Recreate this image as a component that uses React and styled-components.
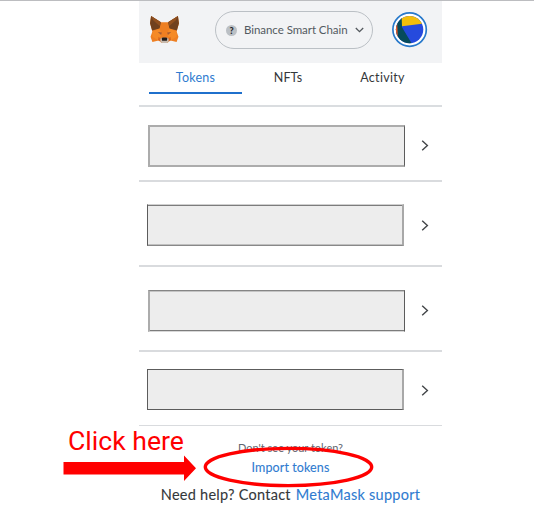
import React from "react";
import styled, { createGlobalStyle } from "styled-components";

const GlobalStyle = createGlobalStyle`
  * { box-sizing: border-box; }
  body { margin: 0; background: #fff; overflow: hidden; }
`;

const Page = styled.div`
  position: relative;
  width: 534px;
  height: 510px;
  border-top: 1px solid #bcbdc0;
  background: #fff;
  font-family: Lato, "Liberation Sans", sans-serif;
`;

const Wallet = styled.main`
  width: 303px;
  margin-left: 139px;
`;

const Header = styled.header`
  display: flex;
  align-items: flex-start;
  height: 62px;
  padding: 10px 14px 0 10px;
  background: #f2f3f5;
`;

const FoxLogo = styled.svg`
  flex: none;
  width: 31px;
  height: 29px;
  margin: 4px -1px 0 0;
`;

const NetworkPicker = styled.button`
  display: flex;
  align-items: center;
  width: 158px;
  height: 38px;
  margin: 0 0 0 36px;
  padding: 0 8px 0 10px;
  border: 1px solid #bbc0c5;
  border-radius: 19px;
  background: #f2f3f5;
  color: #535a61;
  font: inherit;
`;

const NetworkBadge = styled.span`
  flex: none;
  width: 11px;
  height: 11px;
  margin-right: 7px;
  border-radius: 50%;
  background: #bbc0c5;
  color: #24272a;
  font-size: 9px;
  font-weight: 900;
  line-height: 11px;
  text-align: center;
`;

const NetworkName = styled.span`
  width: 106px;
  font-size: 11.5px;
  line-height: 16px;
  letter-spacing: -0.05px;
  text-align: left;
  white-space: nowrap;
`;

const DownIcon = styled.svg`
  flex: none;
  width: 9px;
  height: 6px;
  margin-left: 5px;
`;

const Avatar = styled.svg`
  flex: none;
  width: 37px;
  height: 36px;
  margin: 1px 0 0 18px;
`;

const Tabs = styled.nav`
  display: flex;
  height: 44px;
  padding: 0 10px;
  border-bottom: 2px solid #dadde0;
`;

const Tab = styled.a`
  width: ${(p) => p.$width}px;
  height: 31px;
  padding-top: 6px;
  border-bottom: 2px solid ${(p) => (p.$active ? "#1f70cc" : "transparent")};
  color: ${(p) => (p.$active ? "#2f7bd0" : "#34373a")};
  font-size: 12.5px;
  line-height: 18px;
  letter-spacing: ${(p) => p.$spacing}px;
  text-align: center;
`;

const Row = styled.div`
  display: flex;
  align-items: flex-start;
  height: ${(p) => p.$height}px;
  padding: ${(p) => p.$top}px 13px 0 ${(p) => p.$left}px;
  border-bottom: ${(p) => p.$line}px solid #d9dbde;
`;

const TokenBox = styled.div`
  flex: none;
  width: 257px;
  height: ${(p) => p.$height}px;
  background: #ededed;
  border-style: solid;
  border-width: ${(p) => p.$widths};
  border-color: ${(p) => p.$colors};
  box-shadow: ${(p) => p.$inner || "none"};
`;

const NextIcon = styled.svg`
  flex: none;
  width: 8px;
  height: 12px;
  margin: ${(p) => p.$top}px 0 0 auto;
`;

const Footer = styled.footer`
  display: flex;
  flex-direction: column;
  align-items: center;
  padding-top: 14px;
`;

const Hint = styled.div`
  color: #5f6770;
  font-size: 11px;
  line-height: 16px;
  letter-spacing: 0;
`;

const ImportLink = styled.a`
  margin-top: 3px;
  color: #2f7bd0;
  font-size: 12.5px;
  line-height: 18px;
  letter-spacing: 0.1px;
  -webkit-text-stroke: 0.1px currentColor;
`;

const Help = styled.div`
  margin-top: 8px;
  color: #34373a;
  font-size: 14.5px;
  line-height: 20px;
  letter-spacing: 0.26px;
  white-space: nowrap;
  -webkit-text-stroke: 0.1px currentColor;
`;

const SupportLink = styled.a`
  margin-left: 1px;
  color: #2f7bd0;
`;

const Callout = styled.div`
  position: absolute;
  left: 68px;
  top: 424px;
  color: #f00;
  font-family: Roboto, sans-serif;
  font-size: 26.6px;
  line-height: 32px;
  white-space: nowrap;
`;

const Marks = styled.svg`
  position: absolute;
  left: 60px;
  top: 439px;
  width: 320px;
  height: 54px;
`;

const rows = [
  { height: 75, top: 18, left: 9, line: 2, arrow: 15, box: { $height: 42, $widths: "2px 1px 2px 2px", $colors: "#acacac #5c5c5c #acacac #acacac" } },
  { height: 85, top: 22, left: 8, line: 2, arrow: 16, box: { $height: 42, $widths: "1px 2px 1px 1px", $colors: "#d0d0d0 #a8a8a8 #888 #5c5c5c", $inner: "inset 0 1px #7c7c7c, inset 0 -1px #c0c0c0" } },
  { height: 85, top: 23, left: 9, line: 2, arrow: 15, box: { $height: 42, $widths: "1px 1px 1px 2px", $colors: "#858585 #5c5c5c #d8d8d8 #acacac", $inner: "inset 0 1px #c4c4c4, inset 0 -1px #7c7c7c" } },
  { height: 74, top: 17, left: 8, line: 1, arrow: 16, box: { $height: 41, $widths: "1px 2px 1px 1px", $colors: "#5c5c5c #a8a8a8 #5c5c5c #5c5c5c" } },
];

function Fox() {
  return (
    <FoxLogo viewBox="0 0 30 28">
      <path d="M2 1 11.500 7h7L28 1l1 7-2.300 8 1.800 5-1.800 5-6-1.300L17.500 27h-5L9.300 24.700 3.300 26 1.500 21l1.800-5L1 8z" fill="#ee7f22" />
      <path d="M2 1 11.500 7l-1.200 6-7.300 2L1 8zM28 1l-9.500 6 1.200 6 7.300 2 2-7z" fill="#70411f" />
      <path d="m2 1 9.500 6-1.200 3.500L4 5zM28 1l-9.500 6 1.200 3.500L26 5z" fill="#91501f" />
      <path d="m3.300 16 7-3 2 5.500-3 6.200L3.300 21zM26.700 16l-7-3-2 5.500 3 6.200 6-3.700z" fill="#f58a26" />
      <path d="m8.500 16.500 4 .5-.8 2.300zM21.500 16.500l-4 .5.8 2.300z" fill="#a45b34" />
      <path d="m9.300 21 2.700 2.500-.3 2.200-3-1.500zM20.700 21 18 23.500l.3 2.200 3-1.500z" fill="#d7661d" />
      <path d="m11 23 1.500-1h5l1.500 1v2.800L17.300 27h-4.600L11 25.800z" fill="#c6b9ad" />
      <path d="m12.300 22.500.8-.7h3.800l.8.700-.4 2.500h-4.600z" fill="#211c1a" />
    </FoxLogo>
  );
}

export default function App() {
  return (
    <>
      <GlobalStyle />
      <Page>
        <Wallet>
          <Header>
            <Fox />
            <NetworkPicker>
              <NetworkBadge>?</NetworkBadge>
              <NetworkName>Binance Smart Chain</NetworkName>
              <DownIcon viewBox="0 0 9 6">
                <path d="m.8 1 3.700 3.700L8.200 1" fill="none" stroke="#53585d" strokeWidth="1.300" />
              </DownIcon>
            </NetworkPicker>
            <Avatar viewBox="-0.600 0.400 37 36">
              <defs>
                <clipPath id="avatarDisc"><circle cx="18" cy="18" r="13.700" /></clipPath>
              </defs>
              <circle cx="18" cy="18" r="16.700" fill="#fff" stroke="#2879cb" strokeWidth="1.700" />
              <g clipPath="url(#avatarDisc)">
                <path d="M0 0h36v36H0z" fill="#264add" />
                <path d="M0 0h10.400v15.700L20.500 32.500V36H0z" fill="#064b5c" />
                <path d="M9.800 0H36v11.500L10.400 14.700z" fill="#f3be0b" />
                <path d="M3 8h2.400l.8 18H3z" fill="#f05a2a" />
              </g>
            </Avatar>
          </Header>
          <Tabs>
            <Tab $active $width={93} $spacing={0.25}>Tokens</Tab>
            <Tab $width={92} $spacing={0.1}>NFTs</Tab>
            <Tab $width={97} $spacing={0.3}>Activity</Tab>
          </Tabs>
          {rows.map((r, i) => (
            <Row key={i} $height={r.height} $top={r.top} $left={r.left} $line={r.line}>
              <TokenBox {...r.box} />
              <NextIcon $top={r.arrow} viewBox="0 0.500 8 12">
                <path d="m1.200 1.200 5.200 4.800-5.200 4.800" fill="none" stroke="#424548" strokeWidth="1.400" />
              </NextIcon>
            </Row>
          ))}
          <Footer>
            <Hint>Don't see your token?</Hint>
            <ImportLink>Import tokens</ImportLink>
            <Help>
              Need help? Contact <SupportLink>MetaMask support</SupportLink>
            </Help>
          </Footer>
        </Wallet>
        <Callout>Click here</Callout>
        <Marks viewBox="60 440 320 54">
          <path d="M63.500 462H184v-6.500L196 468.200 184 481v-6.500H63.500z" fill="#f00" />
          <ellipse cx="288.500" cy="467" rx="83.200" ry="18.600" fill="none" stroke="#f00" strokeWidth="3.400" />
        </Marks>
      </Page>
    </>
  );
}
